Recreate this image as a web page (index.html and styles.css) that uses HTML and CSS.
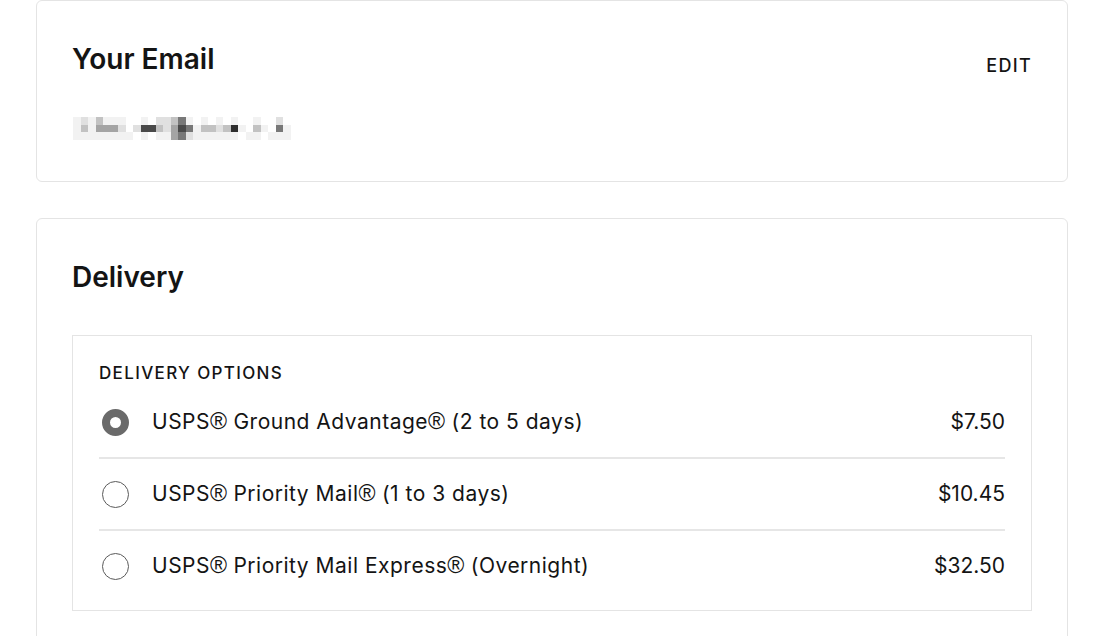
FILE: index.html
```html
<!DOCTYPE html>
<html lang="en">
<head>
<meta charset="utf-8">
<title>Checkout</title>
<link rel="stylesheet" href="styles.css">
</head>
<body>
<main class="page">
  <section class="card card-email">
    <div class="card-head">
      <h2 class="card-title">Your Email</h2>
      <a class="edit-link" href="#">EDIT</a>
    </div>
    <div class="email-blur" aria-label="email hidden">
      <i class="s1"></i><i class="s2"></i><i class="s1"></i><i class="s3"></i><i class="s1"></i><i class="s1"></i><i class="s1"></i><i></i><i></i><i class="s1"></i><i></i><i class="s2"></i><i class="s2"></i><i class="s3"></i><i class="s5"></i><i class="s1"></i><i></i><i class="s1"></i><i></i><i class="s1"></i><i></i><i class="s1"></i><i></i><i></i><i class="s1"></i><i></i><i></i><i class="s2"></i><i></i>
      <i class="s1"></i><i class="s3"></i><i class="s1"></i><i class="s4"></i><i class="s4"></i><i class="s4"></i><i class="s2"></i><i></i><i class="s2"></i><i class="s6"></i><i class="s6"></i><i class="s3"></i><i class="s2"></i><i class="s4"></i><i class="s6"></i><i class="s5"></i><i class="s1"></i><i class="s3"></i><i class="s3"></i><i class="s2"></i><i class="s3"></i><i class="s7"></i><i class="s1"></i><i></i><i class="s3"></i><i class="s1"></i><i></i><i class="s5"></i><i class="s1"></i>
      <i class="s1"></i><i class="s1"></i><i class="s1"></i><i class="s1"></i><i class="s1"></i><i class="s1"></i><i class="s1"></i><i class="s1"></i><i></i><i class="s1"></i><i></i><i class="s1"></i><i class="s1"></i><i class="s4"></i><i class="s5"></i><i class="s2"></i><i class="s1"></i><i class="s1"></i><i class="s1"></i><i class="s1"></i><i class="s1"></i><i class="s1"></i><i></i><i class="s1"></i><i class="s1"></i><i></i><i class="s1"></i><i class="s1"></i><i class="s1"></i>
    </div>
  </section>

  <section class="card card-delivery">
    <h2 class="card-title">Delivery</h2>
    <div class="options">
      <div class="options-label">DELIVERY OPTIONS</div>
      <label class="option">
        <span class="radio radio-on"></span>
        <span class="option-name">USPS<span class="reg">®</span> Ground Advantage<span class="reg">®</span> (2 to 5 days)</span>
        <span class="option-price">$7.50</span>
      </label>
      <label class="option">
        <span class="radio"></span>
        <span class="option-name">USPS<span class="reg">®</span> Priority Mail<span class="reg">®</span> (1 to 3 days)</span>
        <span class="option-price">$10.45</span>
      </label>
      <label class="option">
        <span class="radio"></span>
        <span class="option-name">USPS<span class="reg">®</span> Priority Mail Express<span class="reg">®</span> (Overnight)</span>
        <span class="option-price">$32.50</span>
      </label>
    </div>
  </section>
</main>
</body>
</html>
```

FILE: styles.css
```css
* { box-sizing: border-box; }
html, body { margin: 0; padding: 0; background: #fff; }
body {
  font-family: Inter, "Noto Sans", sans-serif;
  color: #141414;
  overflow: hidden;
  height: 636px;
}
.page {
  width: 1032px;
  margin-left: 36px;
  display: flex;
  flex-direction: column;
  gap: 36px;
}
.card {
  border: 1px solid #e4e4e4;
  border-radius: 6px;
  padding: 0 35px;
  background: #fff;
}
.card-email {
  height: 182px;
  padding-top: 41px;
}
.card-head {
  display: flex;
  justify-content: space-between;
  align-items: center;
}
.card-title {
  margin: 0;
  font-size: 28px;
  font-weight: 600;
  line-height: 33px;
  letter-spacing: 0;
}
.edit-link {
  color: #141414;
  text-decoration: none;
  font-size: 18px;
  font-weight: 500;
  letter-spacing: 1.3px;
  margin-top: 13px;
}
.email-blur {
  margin-top: 41px;
  margin-left: 1px;
  display: grid;
  grid-template-columns: repeat(29, 7.5px);
  grid-auto-rows: 7.7px;
  width: max-content;
}
.email-blur i { display: block; }
.s1 { background: #f2f2f2; }
.s2 { background: #e0e0e0; }
.s3 { background: #c2c2c2; }
.s4 { background: #a4a4a4; }
.s5 { background: #787878; }
.s6 { background: #4a4a4a; }
.s7 { background: #2e2e2e; }

.card-delivery {
  padding-top: 42px;
  height: 440px;
}
.options {
  margin-top: 41px;
  border: 1px solid #e4e4e4;
  padding: 26px 26px 9px 26px;
}
.options-label {
  font-size: 17px;
  font-weight: 500;
  letter-spacing: 1.35px;
  line-height: 23px;
  margin-bottom: 2px;
}
.option {
  display: flex;
  align-items: center;
  height: 72px;
  border-bottom: 2px solid #e6e6e6;
  cursor: pointer;
}
.option:last-child { border-bottom: none; height: 70px; }
.radio {
  flex: none;
  width: 27px;
  height: 27px;
  border-radius: 50%;
  border: 1px solid #5a5a5a;
  margin-left: 3px;
  margin-right: 23px;
}
.radio-on {
  border: 8.5px solid #6a6a6a;
}
.option-name {
  flex: 1;
  font-size: 21px;
  line-height: 28px;
  letter-spacing: 0.5px;
}
.reg {
  font-family: "Liberation Sans", Arial, sans-serif;
  font-size: 1.1em;
  line-height: 0;
  letter-spacing: 0;
}
.option-price {
  font-size: 21px;
  line-height: 28px;
}
```
